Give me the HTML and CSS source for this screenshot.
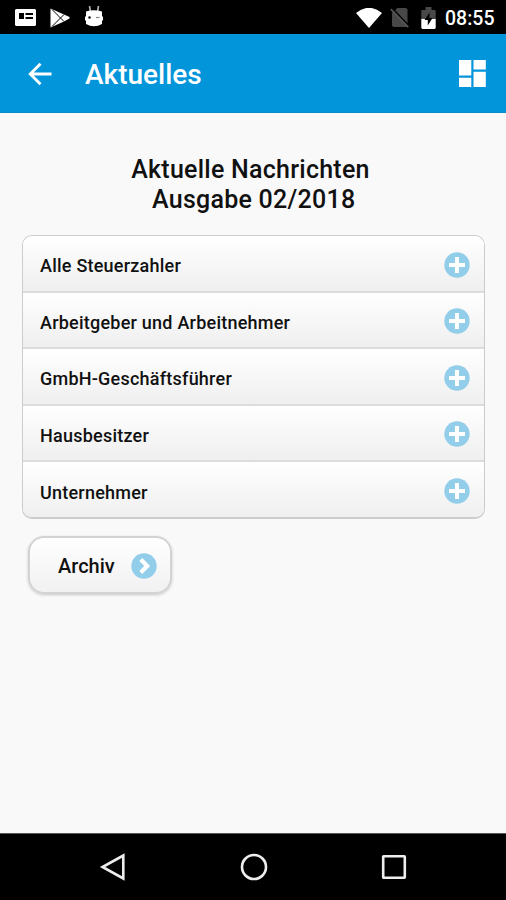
FILE: index.html
```html
<!doctype html>

<html lang="de">

<head>
  <meta charset="utf-8">
  <title>Aktuelles</title>
  <link rel="stylesheet" href="styles.css">
</head>

<body>
  <!-- shared icons for the list and the button -->
  <svg class="symbols" width="0" height="0">
    <symbol id="plus" viewBox="0 0 26 26">
      <circle cx="13" cy="13" r="12.7" fill="#92cdea"/>
      <path d="M13 5v16M5 13h16" stroke="#fff" stroke-width="4"/>
    </symbol>
    <symbol id="chevron" viewBox="0 0 26 26">
      <circle cx="13" cy="13" r="12.7" fill="#92cdea"/>
      <path d="M9.8 6.6L16.2 13l-6.4 6.4" fill="none" stroke="#fff" stroke-width="4.2"/>
    </symbol>
  </svg>

  <div class="App">
    <div class="status-bar">
      <svg class="status-card" width="21" height="17" viewBox="0 0 21 17">
        <path fill="#fff" fill-rule="evenodd" d="M1 0h19l1 1v15l-1 1H1l-1-1V1zM4 4v6h5V4zM10.500 4v2H18V4zM10.500 8v2H18V8z"/>
      </svg>
      <svg class="status-play" width="20" height="20" viewBox="0 0 20 20">
        <path d="M.5.5L14 6.500l5.500 2.500v1.500L14 13.500.5 19.500z" fill="#fff"/>
        <path d="M2 1.500l12 12M2 18.500L14 6.500" stroke="#000" stroke-width="1"/>
      </svg>
      <svg class="status-droid" width="18" height="21" viewBox="0 0 18 21">
        <path d="M4.500 0l1 6M13.500 0l-1 6" stroke="#bbb" stroke-width="1.600"/>
        <path d="M1 5.500q8-2.500 16 0V10l1 1v3l-1 1v3q-8 4.500-16 0v-3l-1-1v-3l1-1z" fill="#fff"/>
        <circle cx="4.500" cy="11.500" r="1.200"/>
        <path d="M11 11.500h3.500" stroke="#888" stroke-width="1.200"/>
      </svg>
      <svg class="status-wifi" width="26" height="20" viewBox="0 0 26 20">
        <path d="M0 5q13-10.500 26 0L13 20z" fill="#fff"/>
      </svg>
      <svg class="status-sim" width="19" height="21" viewBox="0 0 19 21">
        <path d="M7.500 1H16l1.500 1.500V20H3.500L2 18.500V6z" fill="#484848"/>
        <path d="M1.500.5l18 19" stroke="#000" stroke-width="1.600"/>
        <path d="M.8 2.200l17.400 18" stroke="#555" stroke-width="1.700"/>
      </svg>
      <svg class="status-battery" width="15" height="22" viewBox="0 0 15 22">
        <path d="M4.500 0h6v3H14l.7 1v8H.3V4L1 3h3.500z" fill="#484848"/>
        <path d="M.3 12h14.400v9l-1 1H1.300l-1-1z" fill="#fff"/>
        <path d="M8.500 5.500L3.500 13h3.300v5.500l4.700-7.500H8.500z"/>
      </svg>
      <span class="clock">08:55</span>
    </div>

    <header class="App-header">
      <svg class="back" width="24" height="24" viewBox="0 0 24 24">
        <path d="M23.500 12H2.500M12.500 1.800L2.300 12l10.200 10.200" fill="none" stroke="#fff" stroke-width="2.900"/>
      </svg>
      <h1>Aktuelles</h1>
      <svg class="dashboard" width="27" height="27" viewBox="0 0 27 27">
        <path d="M0 0h12.300v15.600H0zM14.500 0h12.300v9.500H14.500zM0 17.700h12.300V27H0zM14.500 11.700h12.300V27H14.500z" fill="#fff"/>
      </svg>
    </header>

    <main class="content">
      <h2>Aktuelle Nachrichten<br>&nbsp;Ausgabe 02/2018</h2>

      <ul class="news">
        <li><span>Alle Steuerzahler</span><svg width="26" height="26"><use href="#plus"/></svg></li>
        <li><span>Arbeitgeber und Arbeitnehmer</span><svg width="26" height="26"><use href="#plus"/></svg></li>
        <li><span>GmbH-Geschäftsführer</span><svg width="26" height="26"><use href="#plus"/></svg></li>
        <li><span>Hausbesitzer</span><svg width="26" height="26"><use href="#plus"/></svg></li>
        <li><span>Unternehmer</span><svg width="26" height="26"><use href="#plus"/></svg></li>
      </ul>

      <button class="archive">Archiv<svg width="26" height="26"><use href="#chevron"/></svg></button>
    </main>

    <nav class="nav-bar">
      <svg width="28" height="28" viewBox="0 0 28 28">
        <path d="M24.300 2.500v23L3.500 14z"/>
      </svg>
      <svg width="28" height="28" viewBox="0 0 28 28">
        <circle cx="14" cy="14" r="12"/>
      </svg>
      <svg width="28" height="28" viewBox="0 0 28 28">
        <rect x="3.200" y="3.200" width="21.600" height="21.600" rx=".5"/>
      </svg>
    </nav>
  </div>
</body>

</html>
```
FILE: styles.css
```css
body {
  margin: 0;
  padding: 0;
}

.symbols {
  position: absolute;
}

.App {
  display: flex;
  flex-direction: column;
  height: 900px;
  background: #f9f9f9;
  color: #111;
  font-family: Roboto, "Liberation Sans", sans-serif;
  font-weight: 500;
}

.status-bar {
  display: flex;
  align-items: center;
  box-sizing: border-box;
  height: 34px;
  padding: 1px 11px 0 15px;
  background: #000;
  color: #fff;
}

.status-play {
  margin-left: 14px;
}

.status-droid {
  margin: 0 0 2px 15px;
}

.status-wifi {
  margin-left: auto;
}

.status-sim {
  margin-left: 8px;
}

.status-battery {
  margin-left: 12px;
}

.clock {
  width: 50px;
  margin-left: 9px;
  padding-top: 2px;
  font-size: 19.5px;
  line-height: 32px;
  white-space: nowrap;
}

.App-header {
  display: flex;
  align-items: center;
  box-sizing: border-box;
  height: 79px;
  padding: 1px 20px 0 28px;
  background: #0295da;
  border-bottom: 1px solid #0b8bc9;
  color: #fff;
}

.App-header h1 {
  margin: 3px 0 0 33px;
  font-size: 28px;
  font-weight: 500;
  line-height: 34px;
}

.dashboard {
  margin-left: auto;
}

.content {
  flex: 1;
  padding: 42px 21px 0 22px;
}

h2 {
  margin: 0 6px 0 0;
  font-size: 25px;
  font-weight: 500;
  line-height: 29.5px;
  letter-spacing: .25px;
  text-align: center;
}

.news {
  margin: 21px 0 0;
  padding: 0;
  list-style: none;
  border: 1px solid #ccc;
  border-bottom-width: 2px;
  border-radius: 10px;
  overflow: hidden;
}

.news li {
  display: flex;
  align-items: center;
  justify-content: space-between;
  box-sizing: border-box;
  height: 56.5px;
  padding: 3px 14px 0 17px;
  background: linear-gradient(#fff, #efefef);
  border-bottom: 2px solid #dcdcdc;
  font-size: 18px;
  letter-spacing: .23px;
}

.news span {
  padding-top: 2px;
}

.news li:last-child {
  height: 55px;
  border-bottom: 0;
}

.archive {
  display: flex;
  align-items: center;
  justify-content: space-between;
  box-sizing: border-box;
  width: 144px;
  height: 58px;
  margin: 17px 0 0 6px;
  padding: 2px 13px 0 28px;
  background: linear-gradient(#fff, #f1f1f1);
  border: 2px solid #d3d3d3;
  border-radius: 16px;
  box-shadow: 0 1px 3px rgba(0, 0, 0, .2);
  color: #111;
  font: inherit;
  font-size: 20px;
}

.nav-bar {
  display: flex;
  align-items: center;
  justify-content: space-between;
  box-sizing: border-box;
  height: 67px;
  padding: 0 98px 0 99px;
  background: #000;
  border-top: 1px solid #555;
}

.nav-bar svg {
  fill: none;
  stroke: #eee;
  stroke-width: 2.600;
}
```
